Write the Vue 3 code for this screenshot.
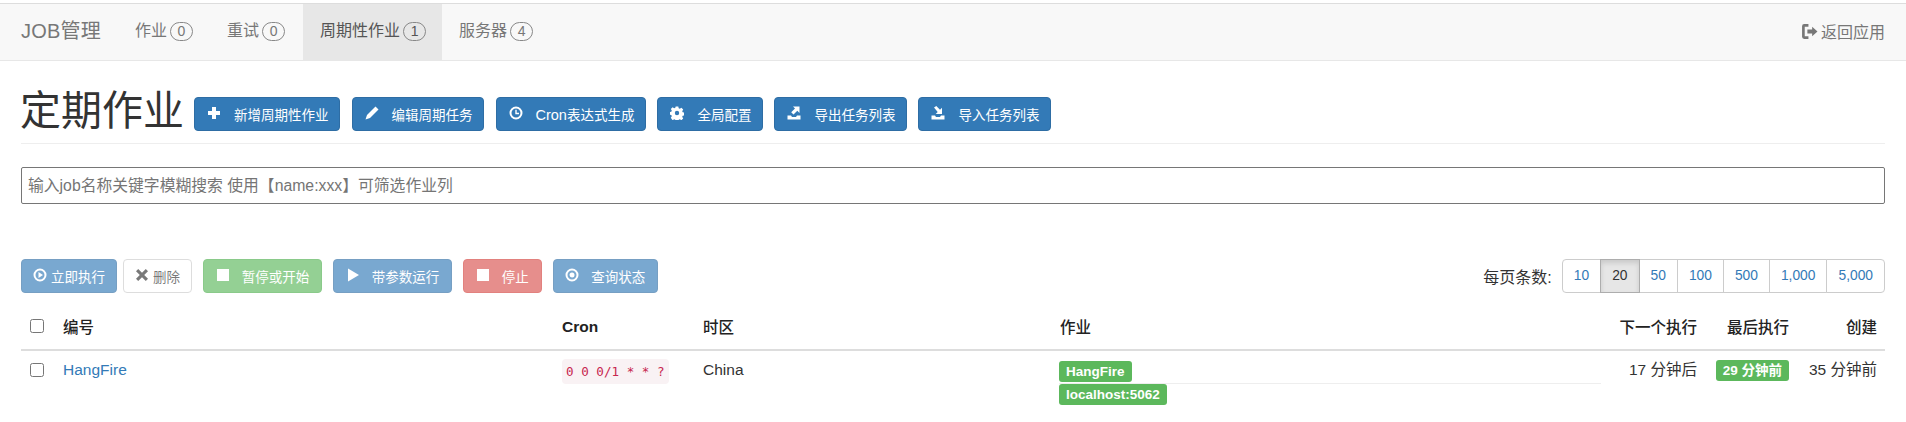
<script setup>
const navItems = [
  { label: '作业', count: 0 },
  { label: '重试', count: 0 },
  { label: '周期性作业', count: 1, active: true },
  { label: '服务器', count: 4 }
]
const sizes = ['10', '20', '50', '100', '500', '1,000', '5,000']
</script>

<template>
  <div class="page">
    <nav class="navbar">
      <span class="brand">JOB管理</span>
      <a v-for="item in navItems" :key="item.label" class="nav-link" :class="{ active: item.active }">
        {{ item.label }}<span class="badge">{{ item.count }}</span>
      </a>
      <a class="nav-back">
        <svg class="back-icon" viewBox="0 0 16 16"><path d="M7 1H3a2 2 0 0 0-2 2v10a2 2 0 0 0 2 2h4v-2.5H3.5v-9H7z" /><path d="M6 6.200h4.500V3.500L15.500 8l-5 4.500V9.800H6z" /></svg>返回应用
      </a>
    </nav>

    <main class="content">
      <header class="page-head">
        <h1>定期作业</h1>
        <div class="head-actions">
          <button class="btn primary">
            <svg class="ico" viewBox="0 0 14 14"><path d="M5 1h4v4h4v4H9v4H5V9H1V5h4z" /></svg><span>新增周期性作业</span>
          </button>
          <button class="btn primary">
            <svg class="ico" viewBox="0 0 14 14"><path d="M10.500 0.500 13.500 3.500 5 12l-4.500 1.500L2 9z" /></svg><span>编辑周期任务</span>
          </button>
          <button class="btn primary">
            <svg class="ico" viewBox="0 0 14 14"><path fill-rule="evenodd" d="M7 .5a6.500 6.500 0 1 1 0 13 6.500 6.500 0 0 1 0-13zm0 2a4.500 4.500 0 1 0 0 9 4.500 4.500 0 0 0 0-9zM6.300 3.800h1.400v3h2.300v1.400H6.300z" /></svg><span><span class="cron-word">Cron</span>表达式生成</span>
          </button>
          <button class="btn primary">
            <svg class="ico" viewBox="0 0 14 14"><path fill-rule="evenodd" d="M5.700.5h2.600l.4 1.800 1.100.5 1.600-1 1.800 1.800-1 1.600.5 1.100 1.800.4v2.600l-1.800.4-.5 1.100 1 1.600-1.800 1.800-1.600-1-1.100.5-.4 1.800H5.700l-.4-1.800-1.100-.5-1.600 1L.8 11.800l1-1.600-.5-1.100-1.800-.4V6.100l1.800-.4.5-1.100-1-1.600L2.600 1.200l1.600 1 1.100-.5zM7 4.800a2.200 2.200 0 1 0 0 4.400 2.200 2.200 0 0 0 0-4.400z" /></svg><span>全局配置</span>
          </button>
          <button class="btn primary">
            <svg class="ico" viewBox="0 0 14 14"><path d="M6 0.500h6.500V7L10.300 4.800 6.500 8.600 4.200 6.300 8 2.500z" /><path d="M0.500 9.500h3.500l1 1.500h4l1-1.500h3.500v4H0.500z" /></svg><span>导出任务列表</span>
          </button>
          <button class="btn primary">
            <svg class="ico" viewBox="0 0 14 14"><path d="M3 1.500 5.300 0 9 3.700 11 1.700V8H4.700L6.700 6z" /><path d="M0.500 9.500h3.500l1 1.500h4l1-1.500h3.500v4H0.500z" /></svg><span>导入任务列表</span>
          </button>
        </div>
      </header>

      <input class="search" type="text" placeholder="输入job名称关键字模糊搜索 使用【name:xxx】可筛选作业列" />

      <div class="toolbar">
        <div class="toolbar-actions">
          <div class="pair">
            <button class="btn primary off tight">
              <svg class="ico" viewBox="0 0 14 14"><path fill-rule="evenodd" d="M7 .5a6.500 6.500 0 1 1 0 13 6.500 6.500 0 0 1 0-13zm0 2a4.500 4.500 0 1 0 0 9 4.500 4.500 0 0 0 0-9zM5.500 4l4.500 3-4.500 3z" /></svg><span>立即执行</span>
            </button>
            <button class="btn plain off tight">
              <svg class="ico" viewBox="0 0 14 14"><path d="M3.200 1 7 4.800 10.800 1 13 3.200 9.200 7 13 10.800 10.800 13 7 9.200 3.200 13 1 10.800 4.800 7 1 3.200z" /></svg><span>删除</span>
            </button>
          </div>
          <button class="btn success off wide">
            <svg class="ico" viewBox="0 0 14 14"><path d="M1 1h12v12H1z" /></svg><span>暂停或开始</span>
          </button>
          <button class="btn primary off wide">
            <svg class="ico" viewBox="0 0 14 14"><path d="M2 0.500 13 7 2 13.500z" /></svg><span>带参数运行</span>
          </button>
          <button class="btn danger off wide">
            <svg class="ico" viewBox="0 0 14 14"><path d="M1 1h12v12H1z" /></svg><span>停止</span>
          </button>
          <button class="btn primary off wide">
            <svg class="ico" viewBox="0 0 14 14"><path fill-rule="evenodd" d="M7 .5a6.500 6.500 0 1 1 0 13 6.500 6.500 0 0 1 0-13zm0 2a4.500 4.500 0 1 0 0 9 4.500 4.500 0 0 0 0-9zM7 4.500a2.500 2.500 0 1 1 0 5 2.500 2.500 0 0 1 0-5z" /></svg><span>查询状态</span>
          </button>
        </div>
        <div class="pager">
          <span class="pager-label">每页条数:</span>
          <div class="pager-group">
            <a v-for="s in sizes" :key="s" class="pager-btn" :class="{ active: s === '20' }">{{ s }}</a>
          </div>
        </div>
      </div>

      <table class="jobs">
        <colgroup>
          <col class="c-check" /><col class="c-id" /><col class="c-cron" /><col class="c-tz" />
          <col class="c-job" /><col class="c-next" /><col class="c-last" /><col class="c-created" />
        </colgroup>
        <thead>
          <tr>
            <th><input type="checkbox" class="check" /></th>
            <th>编号</th>
            <th class="latin">Cron</th>
            <th>时区</th>
            <th>作业</th>
            <th class="right">下一个执行</th>
            <th class="right">最后执行</th>
            <th class="right">创建</th>
          </tr>
        </thead>
        <tbody>
          <tr>
            <td><input type="checkbox" class="check" /></td>
            <td><a class="job-link">HangFire</a></td>
            <td><code>0 0 0/1 * * ?</code></td>
            <td>China</td>
            <td class="job-cell">
              <div class="job-line"><span class="tag">HangFire</span></div>
              <div class="job-line second"><span class="tag">localhost:5062</span></div>
            </td>
            <td class="right">17 分钟后</td>
            <td class="right"><span class="tag">29 分钟前</span></td>
            <td class="right">35 分钟前</td>
          </tr>
        </tbody>
      </table>
    </main>
  </div>
</template>

<style>
html, body { margin: 0; background: #fff; }
</style>

<style scoped>
.page {
  font-family: "Liberation Sans", "Noto Sans CJK SC", sans-serif;
  font-size: 14px;
  color: #333;
  width: 1906px;
  height: 422px;
  overflow: hidden;
  box-sizing: border-box;
  padding-top: 3px;
}
.navbar {
  display: flex;
  align-items: stretch;
  height: 58px;
  box-sizing: border-box;
  background: #f8f8f8;
  border-top: 1px solid #ddd;
  border-bottom: 1px solid #e7e7e7;
  color: #777;
  padding-left: 21px;
}
.brand { font-size: 20px; line-height: 54px; width: 99px; letter-spacing: .2px; }
.nav-link {
  display: flex;
  align-items: center;
  font-size: 16px;
  line-height: 20px;
  padding: 0 15px 2px;
  margin-right: 4px;
}
.nav-link.active { background: #e7e7e7; color: #555; padding: 0 16px 2px 17px; margin-left: -1px; margin-right: 2px; }
.badge {
  box-sizing: border-box;
  width: 23px;
  height: 19px;
  margin-left: 3px;
  border: 1px solid #888;
  border-radius: 10px;
  font-size: 14px;
  line-height: 17px;
  text-align: center;
}
.nav-back {
  margin-left: auto;
  display: flex;
  align-items: center;
  font-size: 16px;
  padding: 0 21px 2px 0;
}
.back-icon { width: 17px; height: 17px; fill: #777; margin-right: 3px; }

.content { padding: 0 21px; }
.page-head {
  display: flex;
  align-items: flex-start;
  height: 83px;
  box-sizing: border-box;
  border-bottom: 1px solid #eee;
}
h1 {
  margin: 0 0 0 -1px;
  font-size: 41px;
  font-weight: 400;
  line-height: 52px;
  padding-top: 24px;
  width: 174px;
  flex: none;
}
.head-actions { display: flex; gap: 11.500px; padding-top: 36px; }
.btn {
  display: inline-flex;
  align-items: center;
  box-sizing: border-box;
  height: 34px;
  padding: 0 10.500px 0 12px;
  border: 1px solid transparent;
  border-radius: 4px;
  font: inherit;
  font-size: 13.500px;
  gap: 13px;
}
.btn.tight { gap: 4px; padding: 0 11px; }
.btn.wide { gap: 12px; padding: 0 11.750px; }
.cron-word { font-size: 14.500px; }
.ico { width: 14px; height: 14px; fill: currentColor; flex: none; margin-top: -2px; }
.primary { background: #337ab7; border-color: #2e6da4; color: #fff; }
.success { background: #5cb85c; border-color: #4cae4c; color: #fff; }
.danger { background: #d9534f; border-color: #d43f3a; color: #fff; }
.plain { background: #fff; border-color: #ccc; color: #333; }
.off { opacity: .65; }

.search {
  display: block;
  box-sizing: border-box;
  width: 100%;
  height: 37px;
  margin-top: 23px;
  padding: 0 6px;
  border: 1px solid #767676;
  border-radius: 2px;
  font: inherit;
  font-size: 15.800px;
  color: #333;
  outline: none;
}
.search::placeholder { color: #757575; opacity: 1; }

.toolbar {
  display: flex;
  justify-content: space-between;
  align-items: center;
  margin-top: 55px;
  height: 34px;
}
.toolbar-actions { display: flex; gap: 11px; }
.pair { display: flex; gap: 6px; }
.pager { display: flex; align-items: center; gap: 10px; }
.pager-label { font-size: 16px; }
.pager-group { display: flex; }
.pager-btn {
  box-sizing: border-box;
  height: 34px;
  line-height: 32px;
  padding: 0 11px;
  margin-left: -1px;
  border: 1px solid #ccc;
  font-size: 13.800px;
  color: #337ab7;
  background: #fff;
}
.pager-btn:first-child { margin-left: 0; border-radius: 4px 0 0 4px; }
.pager-btn:last-child { border-radius: 0 4px 4px 0; }
.pager-btn.active {
  background: #e6e6e6;
  border-color: #adadad;
  color: #333;
  box-shadow: inset 0 3px 5px rgba(0, 0, 0, .125);
  position: relative;
}

.jobs {
  width: 100%;
  table-layout: fixed;
  border-collapse: collapse;
  margin-top: 11px;
}
.c-check { width: 34px; }
.c-id { width: 499px; }
.c-cron { width: 141px; }
.c-tz { width: 357px; }
.c-next { width: 96px; }
.c-last { width: 92px; }
.c-created { width: 88px; }
th {
  height: 46px;
  padding: 0 8px 2px;
  box-sizing: border-box;
  text-align: left;
  font-size: 15.500px;
  font-weight: 500;
  color: #222;
  border-bottom: 2px solid #ddd;
  vertical-align: middle;
}
th.latin { font-weight: 700; padding-top: 2px; }
td {
  padding: 9px 8px 0;
  vertical-align: top;
  font-size: 15.500px;
  line-height: 20px;
}
.right { text-align: right; }
.check {
  display: block;
  width: 14px;
  height: 14px;
  margin: 0 0 0 1px;
}
td .check { margin-top: 3px; }
.job-link { color: #337ab7; }
code {
  display: inline-block;
  margin-top: -1px;
  padding: 2px 4px;
  font-family: "DejaVu Sans Mono", monospace;
  font-size: 12.600px;
  line-height: 21px;
  color: #c7254e;
  background: #f9f2f4;
  border-radius: 4px;
}
.tag {
  display: inline-block;
  box-sizing: border-box;
  height: 21px;
  padding: 0 7px;
  line-height: 21px;
  font-size: 13.500px;
  font-weight: 700;
  color: #fff;
  background: #5cb85c;
  border-radius: 3px;
}
.job-cell { padding-top: 10px; padding-left: 7px; }
.job-line { height: 22px; border-bottom: 1px solid #eee; }
.job-line.second { border-bottom: 0; }
</style>
